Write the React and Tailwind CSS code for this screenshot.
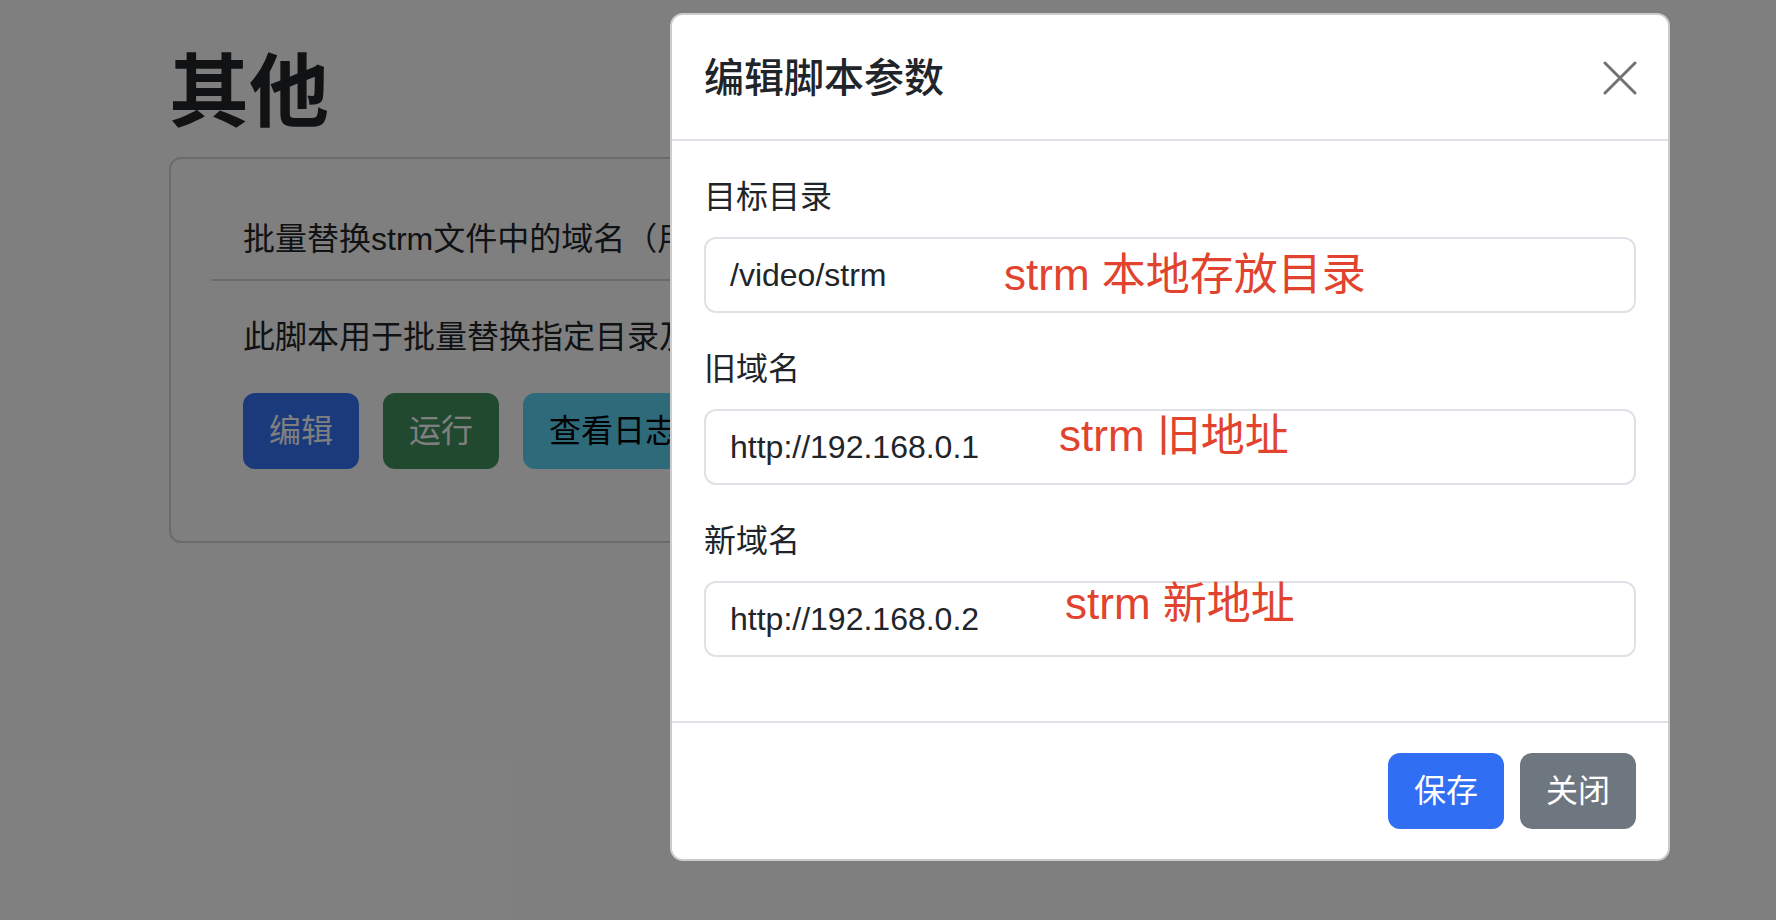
import React from "react";

const fields = [
  { label: "目标目录", value: "/video/strm", note: "strm 本地存放目录", noteClass: "left-[300px] top-[12px]" },
  { label: "旧域名", value: "http://192.168.0.1", note: "strm 旧地址", noteClass: "left-[355px] top-[1px]" },
  { label: "新域名", value: "http://192.168.0.2", note: "strm 新地址", noteClass: "left-[361px] top-[-3px]" },
];

function CloseIcon() {
  return (
    <svg width="34" height="34" viewBox="0 0 34 34" fill="none">
      <path d="M2 2L32 32M32 2L2 32" stroke="#727272" strokeWidth="3" strokeLinecap="round" />
    </svg>
  );
}

export default function App() {
  return (
    <div className="relative h-[920px] w-full overflow-hidden bg-white text-[#212529] font-['Liberation_Sans','Noto_Sans_CJK_SC',sans-serif]">
      {/* page behind the modal */}
      <div className="px-[169px] pt-[45px]">
        <h1 className="mb-[16px] text-[80px] font-semibold leading-[96px]">其他</h1>
        <div className="rounded-[12px] border-2 border-[#d6d6d6] p-[40px]">
          <div className="bg-white">
            <div className="border-b-2 border-[#d6d6d6] px-[32px] py-[16px] text-[32px] leading-[48px]">
              <div className="w-[440px] overflow-hidden whitespace-nowrap">批量替换strm文件中的域名（用于更换服务器地址）</div>
            </div>
            <div className="p-[32px]">
              <p className="mb-[32px] w-[440px] overflow-hidden whitespace-nowrap text-[32px] leading-[48px]">
                此脚本用于批量替换指定目录及其子目录下所有strm文件中的域名。
              </p>
              <div className="flex gap-[24px]">
                <button className="h-[76px] rounded-[12px] border-2 border-transparent bg-[#3674f8] px-[24px] text-[32px] text-white">编辑</button>
                <button className="h-[76px] rounded-[12px] border-2 border-transparent bg-[#42925e] px-[24px] text-[32px] text-white">运行</button>
                <button className="h-[76px] rounded-[12px] border-2 border-transparent bg-[#5cd4f4] px-[24px] text-[32px] text-black">查看日志</button>
              </div>
            </div>
          </div>
        </div>
      </div>

      {/* backdrop */}
      <div className="absolute inset-0 bg-black/50" />

      {/* modal */}
      <div className="absolute left-[670px] top-[13px] w-[1000px] rounded-[13px] border-2 border-black/20 bg-white">
        <div className="flex items-center justify-between border-b-2 border-[#dee2e6] px-[32px] pb-[31px] pt-[33px]">
          <h5 className="text-[40px] font-medium leading-[60px]">编辑脚本参数</h5>
          <button className="mr-[-1px] flex h-[48px] w-[48px] items-center justify-end">
            <CloseIcon />
          </button>
        </div>

        <div className="p-[32px]">
          {fields.map((f) => (
            <div key={f.label} className="mb-[32px]">
              <label className="mb-[16px] block text-[32px] leading-[48px]">{f.label}</label>
              <div className="relative">
                <div className="flex h-[76px] items-center rounded-[12px] border-2 border-[#dee2e6] px-[24px] text-[32px]">
                  {f.value}
                </div>
                <span className={`absolute whitespace-nowrap text-[44px] leading-[52px] text-[#e1432e] ${f.noteClass}`}>
                  {f.note}
                </span>
              </div>
            </div>
          ))}
        </div>

        <div className="flex justify-end gap-[16px] border-t-2 border-[#dee2e6] px-[32px] py-[30px]">
          <button className="h-[76px] rounded-[12px] border-2 border-transparent bg-[#306ef4] px-[24px] text-[32px] text-white">保存</button>
          <button className="h-[76px] rounded-[12px] border-2 border-transparent bg-[#6e767f] px-[24px] text-[32px] text-white">关闭</button>
        </div>
      </div>
    </div>
  );
}
